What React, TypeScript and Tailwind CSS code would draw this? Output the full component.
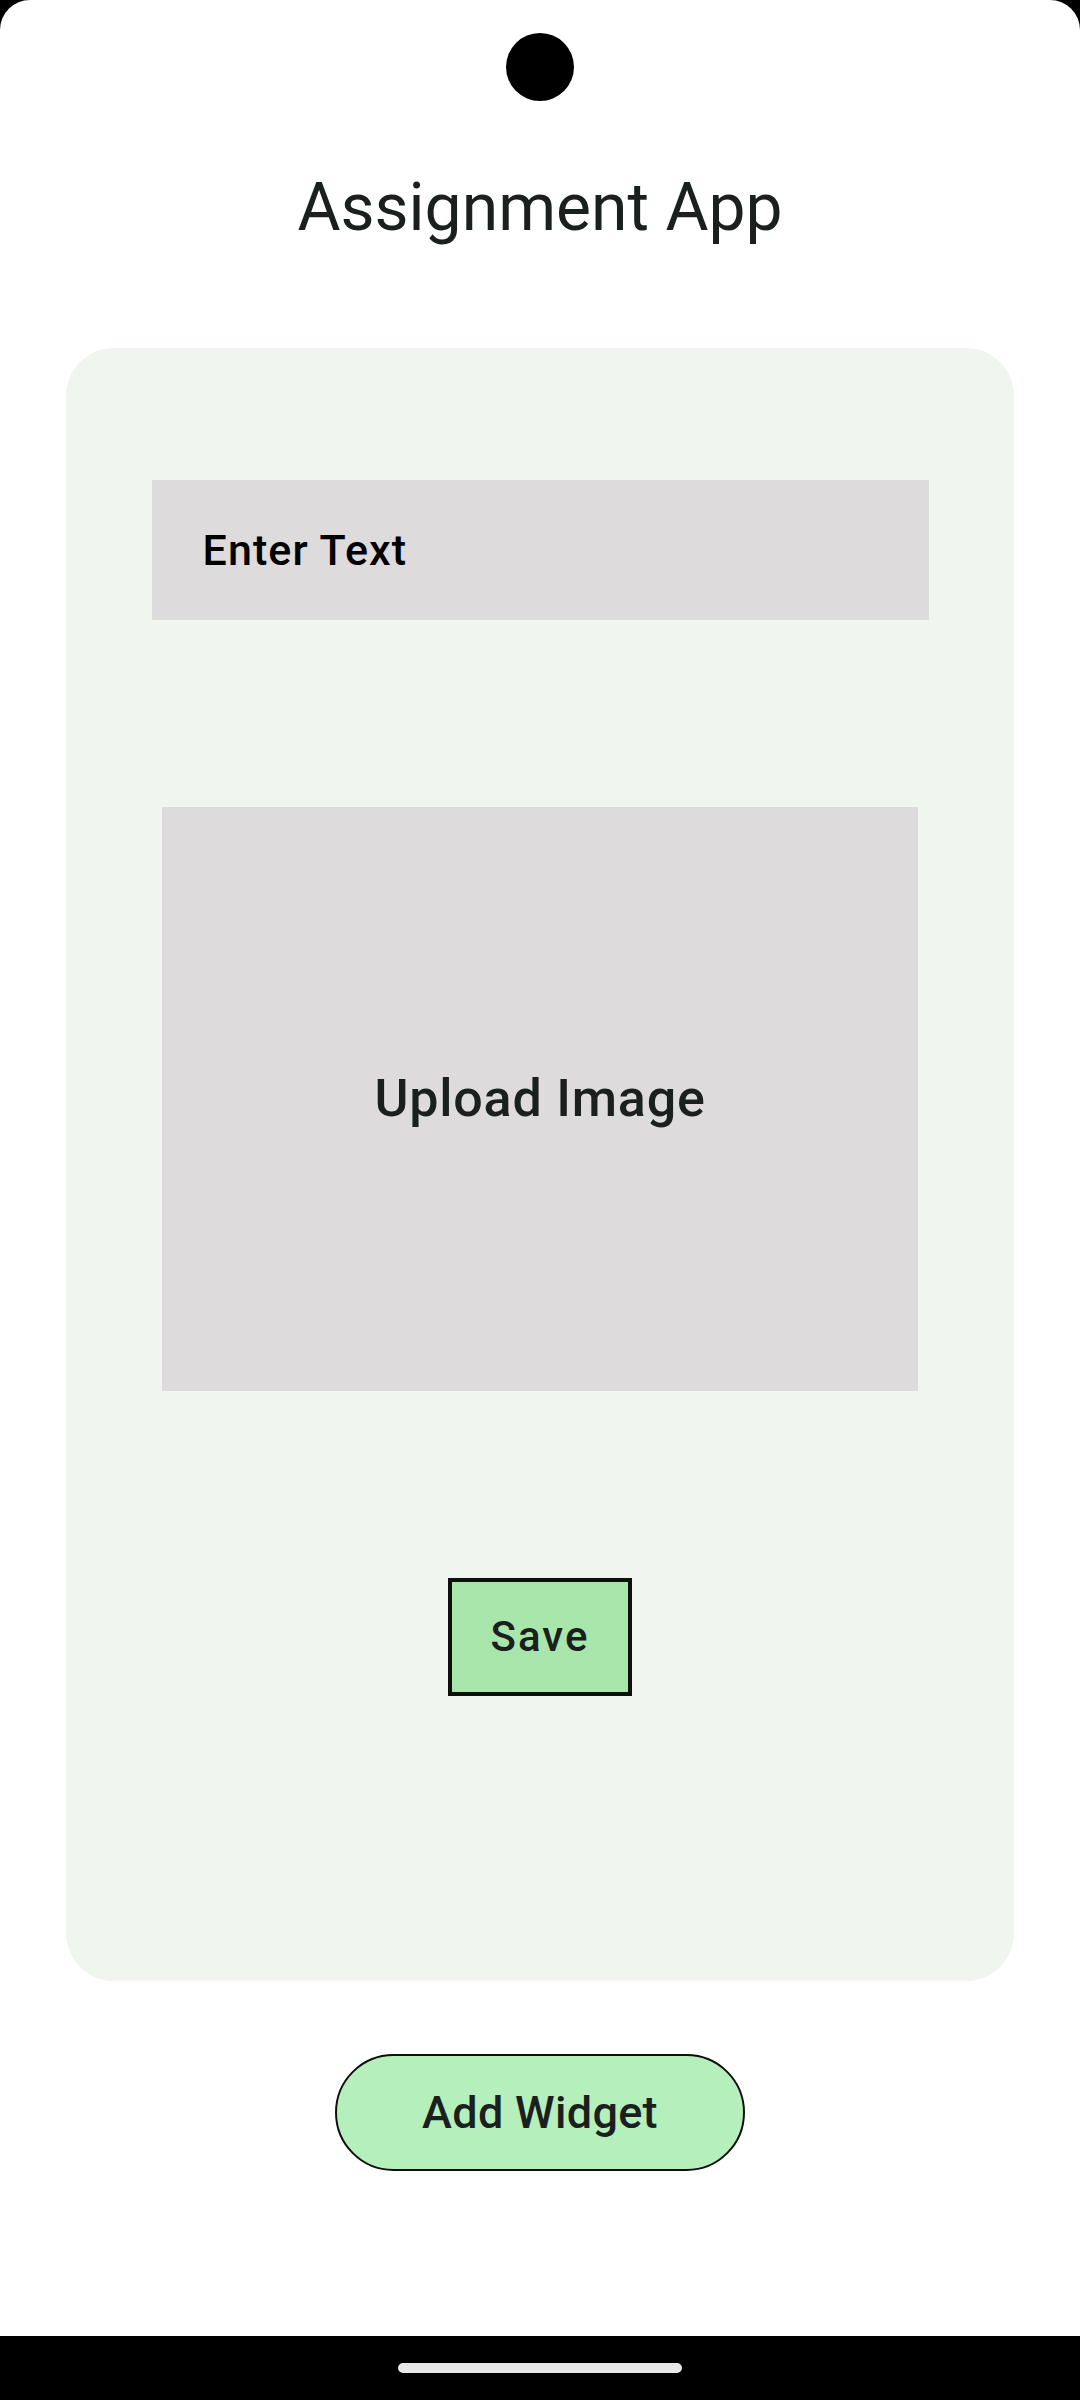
export default function App() {
  return (
    <div className="w-[1080px] h-[2400px] bg-black flex flex-col font-['Roboto',sans-serif]">
      {/* Screen */}
      <div className="h-[2336px] bg-white rounded-t-[30px] flex flex-col items-center">
        {/* Camera hole */}
        <div className="mt-[33px] w-[68px] h-[68px] rounded-full bg-black" />

        <h1 className="mt-[74px] text-[66px] leading-[66px] font-normal text-[#1b1f1d]">Assignment App</h1>

        {/* Card */}
        <div className="mt-[107px] w-[948px] h-[1633px] rounded-[48px] bg-[#f0f5ef] flex flex-col items-center">
          <div className="mt-[132px] w-[777px] h-[140px] bg-[#dddbdc] flex items-center pl-[51px]">
            <span className="text-[43px] leading-none font-medium tracking-[1.1px] text-black">Enter Text</span>
          </div>

          <div className="mt-[187px] w-[756px] h-[584px] bg-[#dddbdc] flex items-center justify-center">
            <span className="text-[52px] leading-none font-medium tracking-[0.8px] text-[#1b1f1d]">Upload Image</span>
          </div>

          <button className="mt-[187px] w-[184px] h-[118px] bg-[#a8e6ab] border-[4px] border-[#0d110e] flex items-center justify-center">
            <span className="text-[42px] leading-none font-medium tracking-[2px] text-[#1b1f1d]">Save</span>
          </button>
        </div>

        <button className="mt-[73px] w-[410px] h-[117px] rounded-full bg-[#b5efbc] border-2 border-[#0d110e] flex items-center justify-center">
          <span className="text-[45px] leading-none font-medium tracking-[0.3px] text-[#1b1f1d]">Add Widget</span>
        </button>
      </div>

      {/* Navigation bar */}
      <div className="h-[64px] flex justify-center">
        <div className="mt-[27px] w-[284px] h-[10px] rounded-full bg-[#e8e8e8]" />
      </div>
    </div>
  );
}
